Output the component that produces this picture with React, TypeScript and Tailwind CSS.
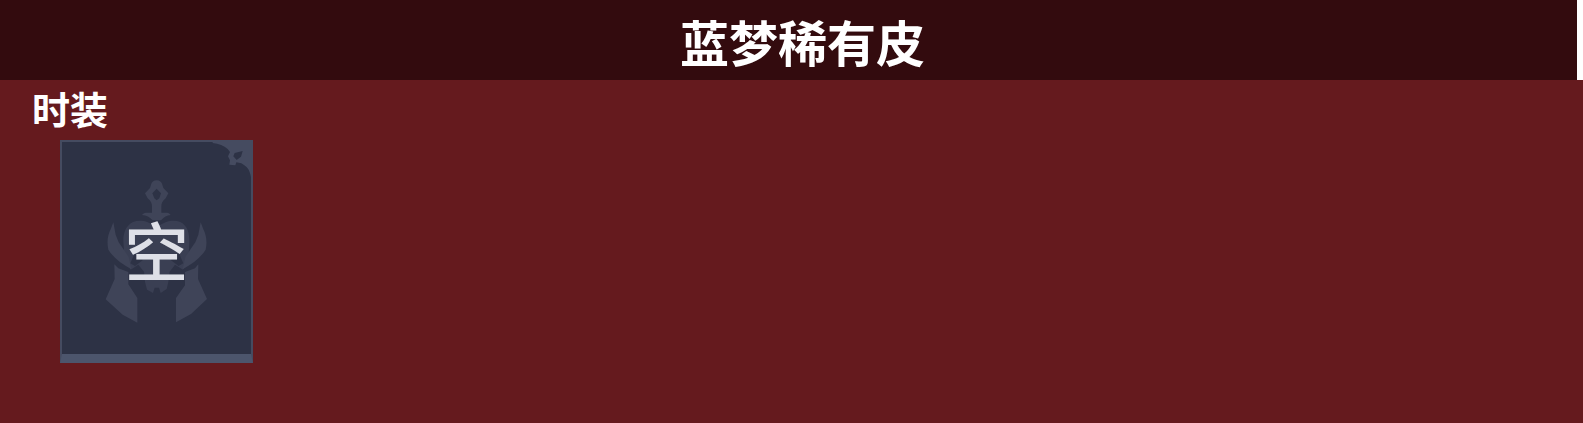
const sections = [{ title: "时装", items: ["空"] }];

function EmptyCard({ label }: { label: string }) {
  return (
    <li className="relative flex h-[223px] w-[193px] items-center justify-center border-2 border-b-[9px] border-[#454b60] border-b-[#4c556c] bg-[#2d3245]">
      <svg
        className="absolute -top-0.5 -left-0.5 h-[223px] w-[193px]"
        viewBox="-3 0 579 669"
        fill="#3f4458"
        aria-hidden="true"
      >
        {/* corner ornament */}
        <path
          fill="#454b60"
          fillRule="evenodd"
          d="M455 6 H570 V112 C567 94 561 83 550 76 L541 70 L526 67 L523 76 L505 74 L507 61 L501 49 L507 36 L500 27 C489 17 473 11 455 9 Z M545 33 L540 50 L527 60 L517 49 L521 39 Z"
        />
        {/* sword hilt */}
        <path
          fillRule="evenodd"
          d="M287 121 C296 121 302 126 304 134 L307 144 L322 160 L314 175 C304 184 301 190 301 200 L301 218 C312 220 321 215 329 225 C318 226 308 231 300 241 H275 C267 231 256 226 243 225 C252 215 262 220 273 218 L273 200 C273 190 270 184 260 175 L252 160 L267 144 L270 134 C272 126 278 121 287 121 Z M287 146 L274 160 L280 175 L287 181 L295 175 L300 160 Z"
        />
        {/* helmet */}
        <path
          fill="#3a3f53"
          fillRule="evenodd"
          d="M216 246 C238 239 259 242 287 262 C315 242 337 239 358 246 C380 257 385 280 385 302 L383 350 L366 389 L342 374 L326 395 L322 426 L317 447 L299 459 L294 443 H281 L276 459 L258 449 L252 426 L249 395 L232 374 L209 389 L190 350 L187 302 C187 280 194 257 216 246 Z M222 338 L208 370 L222 378 L246 360 Z M353 338 L367 370 L353 378 L329 360 Z"
        />
        {/* horns */}
        <path d="M157 247 L164 284 L173 307 L187 327 L203 351 L211 388 C181 371 157 353 142 329 C137 305 140 286 149 268 Z M419 247 L412 284 L403 307 L389 327 L373 351 L365 388 C395 371 419 353 434 329 C439 305 436 286 427 268 Z" />
        {/* cheek guards */}
        <path d="M160 373 L172 385 L202 396 V433 L229 474 V548 L185 524 L134 478 L161 417 Z M412 373 L402 385 L372 396 V436 L345 474 V547 L390 522 L438 477 L411 417 Z" />
      </svg>
      <span className="relative text-[64px] leading-none font-medium text-[#dee0e7]">
        {label}
      </span>
    </li>
  );
}

export default function App() {
  return (
    <div className="min-h-screen bg-[#651a1e] font-['Noto_Sans_CJK_SC',sans-serif] text-white">
      <div className="bg-white pr-1.5">
        <header className="flex h-20 items-center justify-center bg-[#330b0e] pl-7">
          <h1 className="text-[49px] leading-none font-bold">蓝梦稀有皮</h1>
        </header>
      </div>

      <main>
        {sections.map((s) => (
          <section key={s.title} className="px-8 pt-2">
            <h2 className="text-[38px] leading-10 font-bold">{s.title}</h2>
            <ul className="mt-3 flex flex-wrap gap-4 pl-7">
              {s.items.map((item) => (
                <EmptyCard key={item} label={item} />
              ))}
            </ul>
          </section>
        ))}
      </main>
    </div>
  );
}
